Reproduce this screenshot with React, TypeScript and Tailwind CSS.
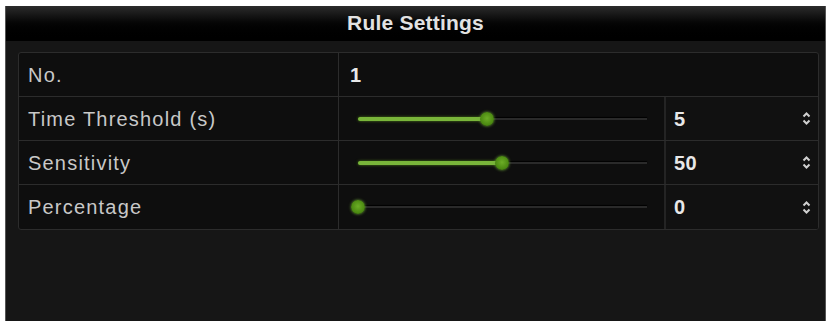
import React from "react";

const rows = [
  { label: "Time Threshold (s)", pct: 0.446, value: "5" },
  { label: "Sensitivity", pct: 0.498, value: "50" },
  { label: "Percentage", pct: 0, value: "0" },
];

function Slider({ pct }: { pct: number }) {
  return (
    <div className="relative h-[14px] w-[289px]">
      <div className="absolute left-0 right-0 top-[6px] h-[2px] bg-[#2a2a2a] shadow-[0_-1px_1px_#000]" />
      <div
        className="absolute left-0 top-[5px] h-[4px] rounded-full bg-[#79b53a] shadow-[0_0_3px_#4f7d1c]"
        style={{ width: `${pct * 100}%` }}
      />
      <div
        className="absolute top-0 h-[14px] w-[14px] -translate-x-1/2 rounded-full bg-[radial-gradient(circle_at_50%_45%,#6cad26_0%,#4c8a12_60%,#2f5a0a_100%)] shadow-[0_0_3px_#6fa83a]"
        style={{ left: `${pct * 100}%` }}
      />
    </div>
  );
}

function Spin() {
  return (
    <svg width="9" height="15" viewBox="0 0 9 15" fill="none" stroke="#d0d0d0" strokeWidth="2">
      <path d="M1.5 5.5 L4.5 2.5 L7.5 5.5" />
      <path d="M1.5 9.5 L4.5 12.5 L7.5 9.5" />
    </svg>
  );
}

export default function App() {
  return (
    <div className="h-[323px] w-[832px] bg-white pl-[5px] pt-[6px]" style={{ fontFamily: "'Liberation Sans', Arial, sans-serif" }}>
      <div className="flex h-[315px] w-[821px] flex-col border-l border-r border-[#555] bg-[#161616]">
        <div className="flex h-[35px] items-center justify-center bg-gradient-to-b from-[#2c2c2c] via-[#050505] to-black pb-[1px] text-[21px] font-bold tracking-[0.2px] text-[#e2e2e2]">
          Rule Settings
        </div>
        <div className="pl-[12px] pr-[6px] pt-[11px]">
          <div className="overflow-hidden rounded-[3px] border border-[#2c2c2c] bg-[#0e0e0e]">
            <div className="flex h-[44px] border-b border-[#2c2c2c]">
              <div className="flex w-[320px] items-center border-r border-[#2c2c2c] pl-[9px] text-[20px] tracking-[1.2px] text-[#c8c8c8]">No.</div>
              <div className="flex flex-1 items-center pl-[11px] text-[20px] font-bold text-[#e8e8e8]">1</div>
            </div>
            {rows.map((r, i) => (
              <div key={r.label} className={`flex h-[44px] ${i < rows.length - 1 ? "border-b border-[#2c2c2c]" : ""}`}>
                <div className="flex w-[320px] items-center border-r border-[#2c2c2c] pl-[9px] text-[20px] tracking-[1.2px] text-[#c8c8c8]">{r.label}</div>
                <div className="flex w-[327px] items-center border-r-2 border-[#242424] pl-[19px]">
                  <Slider pct={r.pct} />
                </div>
                <div className="flex flex-1 items-center justify-between bg-[#111111] pl-[8px] pr-[7px] text-[20px] font-bold tracking-[0.5px] text-[#e8e8e8]">
                  <span>{r.value}</span>
                  <Spin />
                </div>
              </div>
            ))}
          </div>
        </div>
      </div>
    </div>
  );
}
